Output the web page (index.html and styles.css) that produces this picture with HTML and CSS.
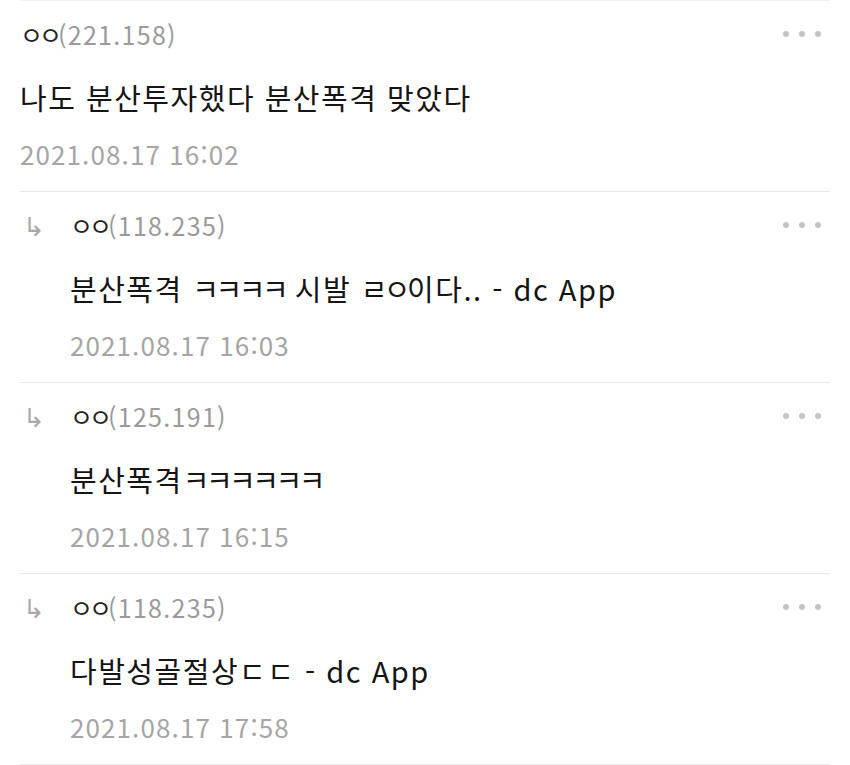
FILE: index.html
```html
<!DOCTYPE html>
<html lang="ko">

<head>
  <meta charset="utf-8">
  <title>댓글</title>
  <link rel="stylesheet" href="styles.css">
</head>

<body>
  <ul class="comments">
    <li class="comment">
      <div class="comment-body">
        <div class="comment-head">
          <span class="nick"><span class="name">ㅇㅇ</span><span class="ip">(221.158)</span></span>
          <span class="more"><i></i><i></i><i></i></span>
        </div>
        <p class="text">나도 분산투자했다 분산폭격 맞았다</p>
        <div class="date">2021.08.17 16:02</div>
      </div>
    </li>
    <li class="comment reply">
      <span class="arrow">↳</span>
      <div class="comment-body">
        <div class="comment-head">
          <span class="nick"><span class="name">ㅇㅇ</span><span class="ip">(118.235)</span></span>
          <span class="more"><i></i><i></i><i></i></span>
        </div>
        <p class="text">분산폭격 <span class="jamo">ㅋㅋㅋㅋ</span> 시발 <span class="jamo">ㄹㅇ</span>이다.. - dc App</p>
        <div class="date">2021.08.17 16:03</div>
      </div>
    </li>
    <li class="comment reply">
      <span class="arrow">↳</span>
      <div class="comment-body">
        <div class="comment-head">
          <span class="nick"><span class="name">ㅇㅇ</span><span class="ip">(125.191)</span></span>
          <span class="more"><i></i><i></i><i></i></span>
        </div>
        <p class="text">분산폭격<span class="jamo">ㅋㅋㅋㅋㅋㅋ</span></p>
        <div class="date">2021.08.17 16:15</div>
      </div>
    </li>
    <li class="comment reply">
      <span class="arrow">↳</span>
      <div class="comment-body">
        <div class="comment-head">
          <span class="nick"><span class="name">ㅇㅇ</span><span class="ip">(118.235)</span></span>
          <span class="more"><i></i><i></i><i></i></span>
        </div>
        <p class="text">다발성골절상ㄷㄷ - dc App</p>
        <div class="date">2021.08.17 17:58</div>
      </div>
    </li>
  </ul>
</body>

</html>
```

FILE: styles.css
```css
* {
  box-sizing: border-box;
}

body {
  margin: 0;
  background-color: #fff;
  font-family: "Noto Sans CJK KR", "Noto Sans", sans-serif;
  color: #1a1a1a;
}

.comments {
  list-style: none;
  margin: 0 20px;
  padding: 0;
  border-top: 1px solid #f0f0f0;
}

.comment {
  display: flex;
  height: 191px;
  padding: 13px 0 0;
  border-bottom: 1px solid #e8e8e8;
}

.comment-body {
  flex: 1;
}

.arrow {
  width: 50px;
  padding-left: 3px;
  line-height: 40px;
  font-size: 26px;
  color: #a8a8a8;
}

.comment-head {
  display: flex;
  justify-content: space-between;
  align-items: center;
  height: 40px;
}

.nick {
  font-size: 25px;
  color: #222;
}

.name {
  letter-spacing: -4px;
}

.ip {
  letter-spacing: 1.3px;
  color: #9a9a9a;
}

.more {
  display: flex;
  gap: 10px;
  margin-right: 9px;
}

.more i {
  width: 6px;
  height: 6px;
  border-radius: 50%;
  background-color: #c4c4c4;
}

.text {
  margin: 20px 0 0;
  line-height: 46px;
  font-size: 29px;
  letter-spacing: 1.5px;
  color: #151515;
}

.jamo {
  letter-spacing: -3.5px;
}

.date {
  margin-top: 14px;
  line-height: 40px;
  font-size: 26px;
  letter-spacing: 1.1px;
  color: #a5a5a5;
}
```
